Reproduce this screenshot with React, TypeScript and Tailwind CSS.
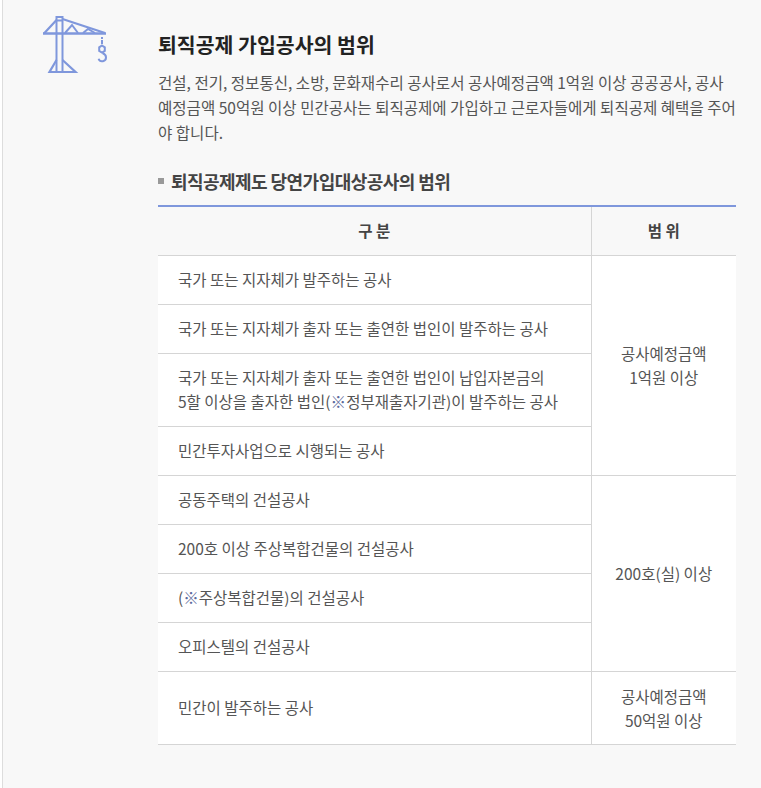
const font = { fontFamily: '"Noto Sans CJK KR", sans-serif' };

const cellCls = 'border-b border-[#d5d5d5] px-5 pt-[11px] pb-[13px] text-left align-middle';
const rangeCls = 'border-b border-l border-[#d5d5d5] text-center align-middle';
const noteCls = 'text-[#5c6a9c]';

function CraneIcon() {
  return (
    <svg width="66" height="60" viewBox="0 0 66 60" fill="none" stroke="#7f97dc" strokeWidth="2" className="shrink-0">
      {/* mast and cab */}
      <path d="M14.5 57V2h6v55M14.5 5.5h6" strokeWidth="2" />
      {/* jib and braces */}
      <path d="M1 18.5h63" strokeWidth="2.5" />
      <path d="M14.5 5L2 18.5M20.5 4L63 18" strokeWidth="2.2" />
      <path d="M23 18l7-8 6 8M41 18l5-4 7 4" strokeWidth="2" />
      {/* base */}
      <path d="M14.5 45L7.5 57h26L20.5 45" strokeWidth="2.2" />
      {/* hook */}
      <path d="M60 22v2M60 25v4" strokeWidth="2" />
      <path d="M60 30.5l2.8 1.8v3.6L60 37.5l-2.8-1.6v-3.6z" strokeWidth="2" />
      <path d="M60.5 38c2.5 1 3.5 2.8 3.5 4.3a3.8 3.8 0 0 1-7.4 1.4" strokeWidth="2" />
    </svg>
  );
}

export default function App() {
  return (
    <div className="ml-[2px] flex min-h-[788px] border-l border-[#dddddd] bg-[#f8f8f8] pl-[39px] pr-[25px]" style={font}>
      <div className="pt-[15px]">
        <CraneIcon />
      </div>
      <div className="ml-[50px] flex-1 pt-[28px]">
        <h2 className="text-[20.5px] leading-[32px] font-bold text-[#222222]">퇴직공제 가입공사의 범위</h2>
        <p className="mt-[10px] text-[15.55px] leading-[25px] text-[#555555]">
          건설, 전기, 정보통신, 소방, 문화재수리 공사로서 공사예정금액 1억원 이상 공공공사, 공사예정금액 50억원 이상 민간공사는 퇴직공제에 가입하고 근로자들에게 퇴직공제 혜택을 주어야 합니다.
        </p>
        <h3 className="mt-[22px] flex h-[28px] items-center text-[18px] font-bold tracking-[-0.55px] text-[#444444]">
          <span className="mr-[7px] h-[6px] w-[6px] bg-[#999999]" />
          퇴직공제제도 당연가입대상공사의 범위
        </h3>
        <table className="mt-[10px] w-[578px] table-fixed border-collapse border-t-2 border-[#7f97dc] bg-white text-[15.5px] leading-[24px] text-[#555555]">
          <colgroup>
            <col className="w-[433px]" />
            <col />
          </colgroup>
          <thead>
            <tr className="h-[49px] bg-[#f8f8f8] font-bold text-[#444444]">
              <th className="border-b border-[#d5d5d5] pb-[2px] text-center">구 분</th>
              <th className="border-b border-l border-[#d5d5d5] pb-[2px] text-center">범 위</th>
            </tr>
          </thead>
          <tbody>
            <tr className="h-[49px]">
              <td className={cellCls}>국가 또는 지자체가 발주하는 공사</td>
              <td rowSpan={4} className={rangeCls}>공사예정금액<br />1억원 이상</td>
            </tr>
            <tr className="h-[49px]">
              <td className={cellCls}>국가 또는 지자체가 출자 또는 출연한 법인이 발주하는 공사</td>
            </tr>
            <tr className="h-[73px]">
              <td className={cellCls}>국가 또는 지자체가 출자 또는 출연한 법인이 납입자본금의<br />5할 이상을 출자한 법인(<span className={noteCls}>※</span>정부재출자기관)이 발주하는 공사</td>
            </tr>
            <tr className="h-[49px]">
              <td className={cellCls}>민간투자사업으로 시행되는 공사</td>
            </tr>
            <tr className="h-[49px]">
              <td className={cellCls}>공동주택의 건설공사</td>
              <td rowSpan={4} className={rangeCls}>200호(실) 이상</td>
            </tr>
            <tr className="h-[49px]">
              <td className={cellCls}>200호 이상 주상복합건물의 건설공사</td>
            </tr>
            <tr className="h-[49px]">
              <td className={cellCls}>(<span className={noteCls}>※</span>주상복합건물)의 건설공사</td>
            </tr>
            <tr className="h-[49px]">
              <td className={cellCls}>오피스텔의 건설공사</td>
            </tr>
            <tr className="h-[73px]">
              <td className={cellCls}>민간이 발주하는 공사</td>
              <td className={rangeCls}>공사예정금액<br />50억원 이상</td>
            </tr>
          </tbody>
        </table>
      </div>
    </div>
  );
}
